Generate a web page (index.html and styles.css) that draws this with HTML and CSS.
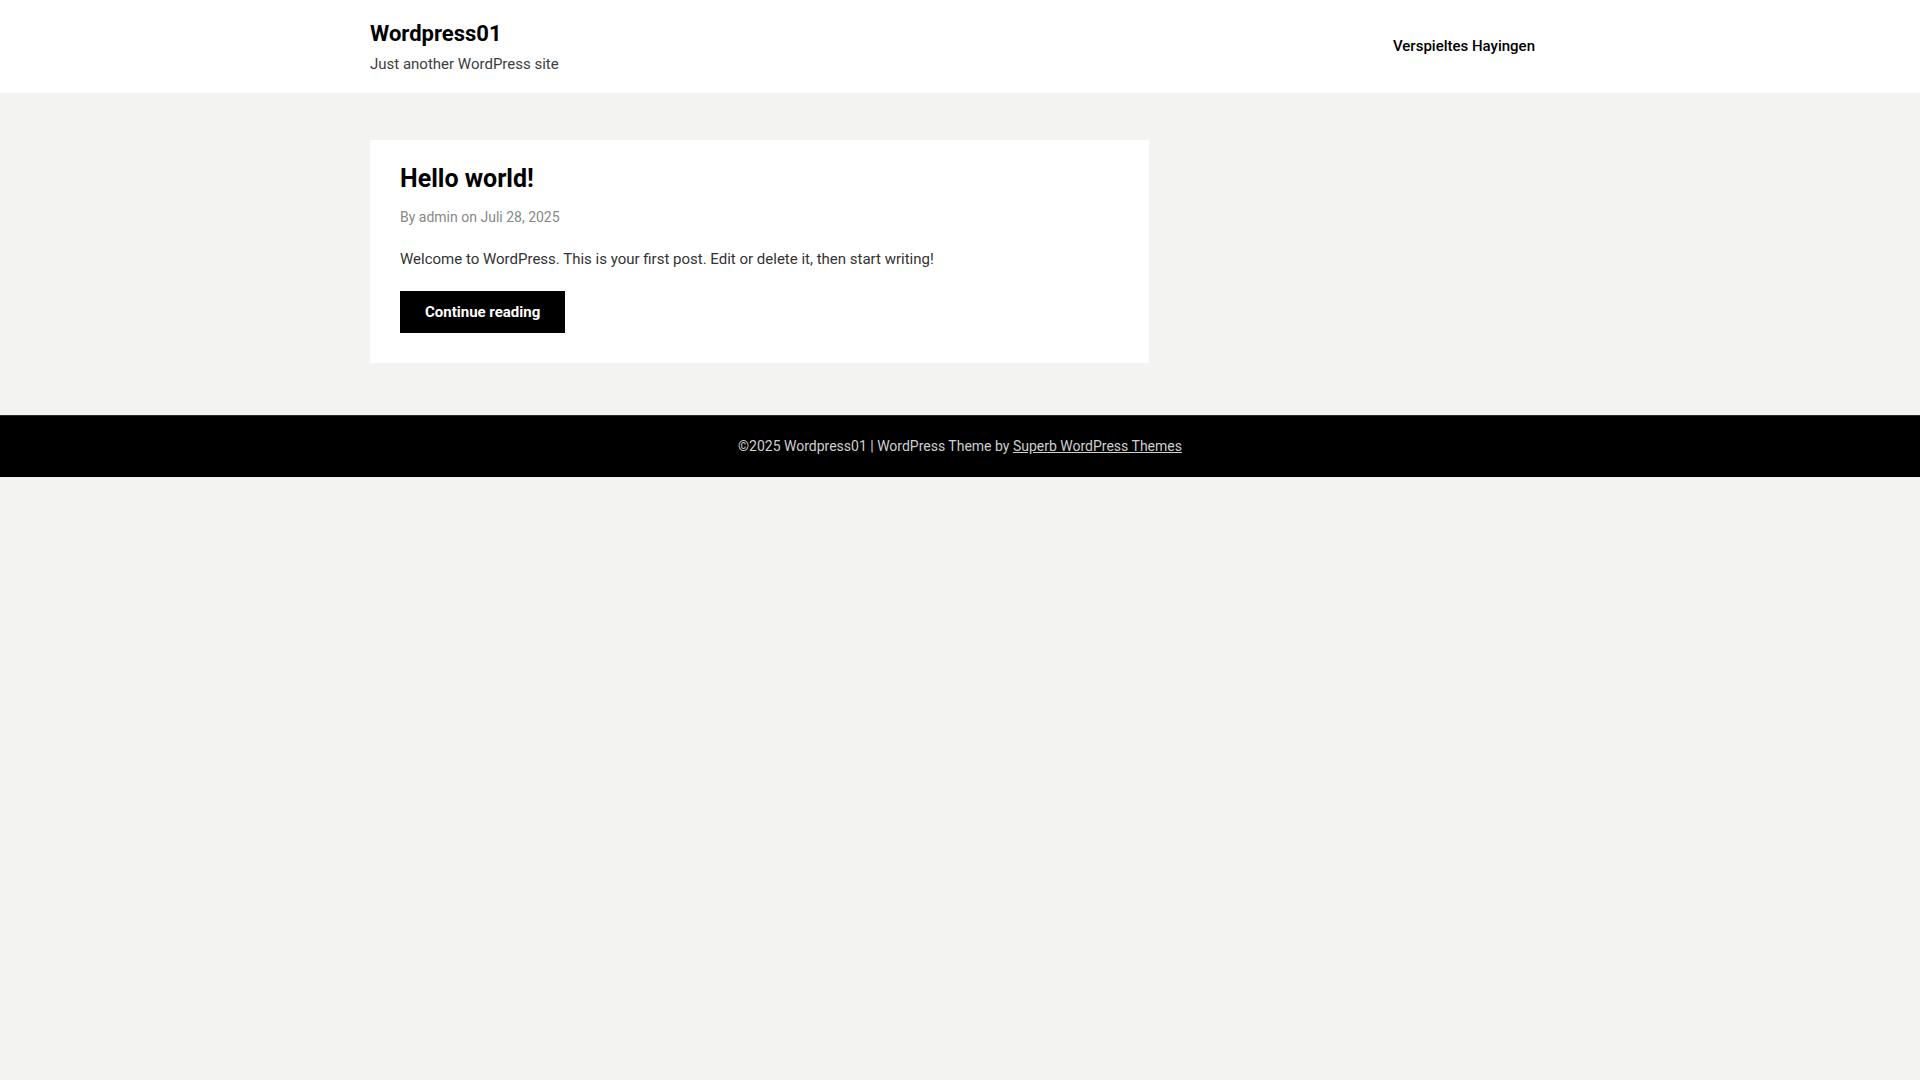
FILE: index.html
```html
<!DOCTYPE html>
<html lang="de">
<head>
<meta charset="utf-8">
<title>Wordpress01 – Just another WordPress site</title>
<link rel="stylesheet" href="styles.css">
</head>
<body>
<header class="site-header">
  <div class="container header-inner">
    <div class="branding">
      <p class="site-title"><a href="#">Wordpress01</a></p>
      <p class="site-description">Just another WordPress site</p>
    </div>
    <nav class="main-nav">
      <a href="#" class="nav-link">Verspieltes Hayingen</a>
    </nav>
  </div>
</header>
<main class="site-content">
  <div class="container content-inner">
    <div class="primary">
      <article class="post">
        <h2 class="entry-title"><a href="#">Hello world!</a></h2>
        <div class="entry-meta">By <a href="#">admin</a> on <a href="#">Juli 28, 2025</a></div>
        <p class="entry-summary">Welcome to WordPress. This is your first post. Edit or delete it, then start writing!</p>
        <a href="#" class="more-link">Continue reading</a>
      </article>
    </div>
    <aside class="sidebar"></aside>
  </div>
</main>
<footer class="site-footer">
  <div class="container footer-inner">
    ©2025 Wordpress01 | WordPress Theme by <a href="#">Superb WordPress Themes</a>
  </div>
</footer>
</body>
</html>
```
FILE: styles.css
```css
* { box-sizing: border-box; }
html, body { margin: 0; padding: 0; }
body {
  background: #f3f4f2;
  font-family: Roboto, "Noto Sans", "Liberation Sans", sans-serif;
  color: #333;
  font-size: 15px;
  line-height: 22.5px;
}
a { color: inherit; text-decoration: none; }
p { margin: 0; }

.container {
  width: 1180px;
  margin: 0 auto;
}

.site-header { background: #fff; }
.header-inner {
  display: flex;
  justify-content: space-between;
  align-items: center;
  padding: 17px 0 17px;
}
.site-title {
  font-size: 22px;
  line-height: 33px;
  font-weight: 700;
  color: #000;
}
.site-description {
  margin-top: 2px;
  font-size: 15px;
  line-height: 24px;
  color: #3d3d3d;
}
.main-nav { padding-right: 15px; }
.nav-link {
  font-size: 15px;
  font-weight: 500;
  color: #000;
  line-height: 22.5px;
}

.site-content { padding: 47px 0 52px; }
.content-inner { display: flex; }
.primary { width: 66%; }
.sidebar { width: 34%; }

.post {
  background: #fff;
  padding: 22px 30px 30px;
}
.entry-title {
  margin: 0;
  font-size: 25px;
  line-height: 34px;
  font-weight: 700;
  color: #000;
}
.entry-meta {
  margin-top: 9.6px;
  font-size: 14px;
  color: #888;
}
.entry-summary {
  margin-top: 20px;
  color: #333;
}
.more-link {
  display: inline-block;
  margin-top: 20.5px;
  background: #000;
  color: #fff;
  font-weight: 700;
  line-height: 22px;
  padding: 10px 25px;
}

.site-footer {
  background: #000;
  border-top: 1px solid #2a2a2a;
  color: #cfcfcf;
}
.footer-inner {
  text-align: center;
  padding: 19px 0 20px;
  font-size: 14px;
  line-height: 22px;
}
.footer-inner a { text-decoration: underline; }
```
